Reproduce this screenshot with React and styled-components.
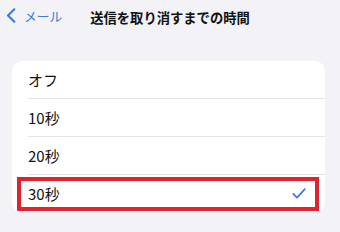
import React from "react";
import styled, { createGlobalStyle } from "styled-components";

const Global = createGlobalStyle`
  html, body { margin: 0; padding: 0; background: #f2f2f7; }
  body { font-family: "Noto Sans CJK JP", "Noto Sans", sans-serif; -webkit-font-smoothing: antialiased; }
`;

const Page = styled.div`
  width: 340px;
  height: 232px;
  background: #f2f2f7;
  overflow: hidden;
`;

const Nav = styled.div`
  display: grid;
  grid-template-columns: 1fr auto 1fr;
  align-items: center;
  height: 30px;
  padding: 2px 0 0 0;
`;

const Back = styled.div`
  display: flex;
  align-items: center;
  gap: 8px;
  padding-left: 6px;
  color: #3a7bd5;
  font-size: 12.8px;
  margin-top: -3px;
`;

const Title = styled.div`
  font-size: 13.3px;
  font-weight: 700;
  color: #111;
  letter-spacing: 0;
  white-space: nowrap;
`;

const Card = styled.div`
  margin: 29px 15px 0 12px;
  background: #fff;
  border-radius: 10px;
  overflow: hidden;
`;

const Row = styled.div`
  position: relative;
  display: flex;
  align-items: center;
  justify-content: space-between;
  height: 37px;
  padding: 0 19px 0 16px;
  font-size: 15px;
  color: #111;
  &::after {
    content: "";
    display: ${(p) => (p.$last ? "none" : "block")};
    position: absolute;
    left: 16px;
    right: 0;
    bottom: -1px;
    height: 1px;
    background: #e3e3e8;
  }
  & + & { margin-top: 1px; }
`;

const Highlight = styled.div`
  position: absolute;
  left: 5px;
  right: 6px;
  top: 2px;
  bottom: 1px;
  border: 4.5px solid #e2222e;
  pointer-events: none;
`;

const Check = () => (
  <svg width="14" height="11" viewBox="0 0 14 11" fill="none">
    <path d="M1.2 5.8 L5 9.6 L12.8 1.2" stroke="#3a7bd5" strokeWidth="1.7" strokeLinecap="round" strokeLinejoin="round" />
  </svg>
);

const Chevron = () => (
  <svg width="10" height="15" viewBox="0 0 10 15" fill="none">
    <path d="M8.3 1.3 L2 7.5 L8.3 13.7" stroke="#3a7bd5" strokeWidth="2.1" strokeLinecap="round" strokeLinejoin="round" />
  </svg>
);

const options = ["オフ", "10秒", "20秒", "30秒"];

export default function App() {
  return (
    <Page>
      <Global />
      <Nav>
        <Back>
          <Chevron />
          <span>メール</span>
        </Back>
        <Title>送信を取り消すまでの時間</Title>
        <div />
      </Nav>
      <Card>
        {options.map((o, i) => {
          const last = i === options.length - 1;
          return (
            <Row key={o} $last={last}>
              <span>{o}</span>
              {last && <Check />}
              {last && <Highlight />}
            </Row>
          );
        })}
      </Card>
    </Page>
  );
}
